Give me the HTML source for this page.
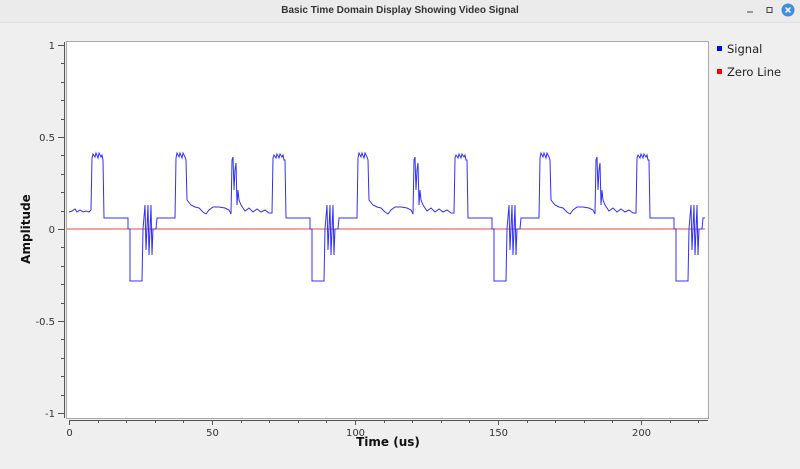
<!DOCTYPE html>
<html><head><meta charset="utf-8"><style>
body{margin:0;width:800px;height:469px;background:#efefef;overflow:hidden;font-family:"Liberation Sans","DejaVu Sans",sans-serif}
.tb{position:absolute;left:0;top:0;width:800px;height:22px;background:#ebebeb;border-bottom:1px solid #e0e0e0}
.tt{position:absolute;left:0;width:800px;top:5px;text-align:center;font-size:10px;font-weight:bold;color:#333}
</style></head><body>
<div class="tb"><div class="tt">Basic Time Domain Display Showing Video Signal</div></div>
<svg width="800" height="469" style="position:absolute;left:0;top:0" font-family="DejaVu Sans, Liberation Sans, sans-serif">
<line x1="747" y1="12" x2="753" y2="12" stroke="#444" stroke-width="1"/>
<rect x="767" y="7.5" width="5" height="5" fill="none" stroke="#444"/>
<circle cx="788" cy="10" r="6.5" fill="#3d8ee0"/>
<path d="M785.5 7.5l5 5M790.5 7.5l-5 5" stroke="#fff" stroke-width="1.5"/>
<rect x="66.5" y="41.5" width="642" height="377" fill="#fff" stroke="#aaa"/>
<defs><clipPath id="c"><rect x="67" y="42" width="638" height="376"/></clipPath>
<path id="p" fill="none" d="M127,218 L128,218 128,229 130,229 130,281 142,281 143,229 145,205 146,250 148,205 149,255 151,205 152,255 153,229 156,229 157,218 175,218 176,158 177,153 179,157 180,153 182,158 183,153 185,157 186,160 187,200 191,205 195,207 199,208 203,212 206,214 209,210 213,207 219,207 225,208 229,210 231,214 232,160 233,157 234,190 235,170 236,163 237,205 238,190 239,200 241,205 245,211 249,208 253,212 257,209 261,212 265,210 269,213 272,213 273,158 274,155 276,158 277,154 279,158 280,154 282,157 283,155 284,160 285,160 286,218 309,218"/></defs>
<g clip-path="url(#c)" stroke="#3030ff" stroke-width="1">
<line x1="67" y1="229" x2="705" y2="229" stroke="#ff4040"/>
<path fill="none" d="M69,212 72,211 75,209 77,212 80,210 83,212 86,211 89,212 91,210 92,158 93,154 95,157 96,153 98,158 99,153 101,157 102,155 103,160 104,218 127,218"/>
<use href="#p"/><use href="#p" x="182"/><use href="#p" x="364"/><use href="#p" x="546"/>
</g>
<g stroke="#555" fill="none">
<line x1="64.5" y1="42" x2="64.5" y2="418"/>
<path d="M58 45.5h7M58 137.5h7M58 229.5h7M58 321.5h7M58 413.5h7"/>
<path d="M61 63.5h3M61 82.5h3M61 100.5h3M61 119.5h3M61 155.5h3M61 174.5h3M61 192.5h3M61 211.5h3M61 247.5h3M61 266.5h3M61 284.5h3M61 303.5h3M61 339.5h3M61 358.5h3M61 376.5h3M61 395.5h3"/>
<line x1="69" y1="420.5" x2="708" y2="420.5"/>
<path d="M69.5 420v5M212.5 420v5M355.5 420v5M498.5 420v5M641.5 420v5"/>
<path d="M98.5 420v3M126.5 420v3M155.5 420v3M183.5 420v3M241.5 420v3M269.5 420v3M298.5 420v3M326.5 420v3M384.5 420v3M412.5 420v3M441.5 420v3M469.5 420v3M527.5 420v3M555.5 420v3M584.5 420v3M612.5 420v3M670.5 420v3M698.5 420v3"/>
</g>
<g font-size="10" fill="#333" text-anchor="end">
<text x="55" y="49">1</text><text x="55" y="141">0.5</text><text x="55" y="233">0</text><text x="55" y="325">-0.5</text><text x="55" y="417">-1</text>
</g>
<g font-size="10" fill="#333" text-anchor="middle">
<text x="69.5" y="436">0</text><text x="212.5" y="436">50</text><text x="355.5" y="436">100</text><text x="498.5" y="436">150</text><text x="641.5" y="436">200</text>
</g>
<text x="388" y="446" font-size="12" font-weight="bold" text-anchor="middle" fill="#111">Time (us)</text>
<text transform="translate(30,229) rotate(-90)" font-size="12" font-weight="bold" text-anchor="middle" fill="#111">Amplitude</text>
<rect x="717" y="46" width="5" height="5" fill="#0000ff"/>
<text x="727" y="53" font-size="11.5" fill="#222">Signal</text>
<rect x="717" y="69" width="5" height="5" fill="#ff0000"/>
<text x="727" y="76" font-size="11.5" fill="#222">Zero Line</text>
</svg>
</body></html>
